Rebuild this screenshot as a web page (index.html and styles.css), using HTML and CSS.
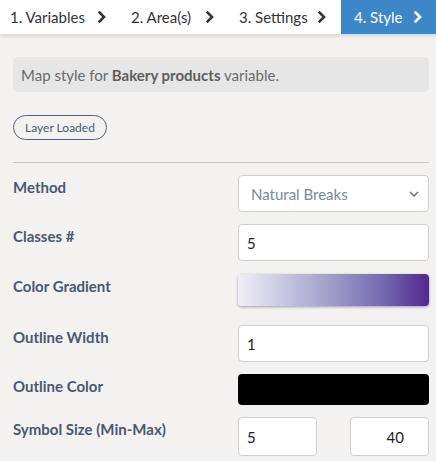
FILE: index.html
```html
<!DOCTYPE html>
<html>
<head>
<meta charset="utf-8">
<link rel="stylesheet" href="styles.css">
</head>
<body>
<nav class="tabs">
  <div class="tab t1"><span>1. Variables</span><svg class="chev" viewBox="0 0 8 12"><polyline points="1.5,1.5 6,6 1.5,10.5"/></svg></div>
  <div class="tab t2"><span>2. Area(s)</span><svg class="chev" viewBox="0 0 8 12"><polyline points="1.5,1.5 6,6 1.5,10.5"/></svg></div>
  <div class="tab t3"><span>3. Settings</span><svg class="chev" viewBox="0 0 8 12"><polyline points="1.5,1.5 6,6 1.5,10.5"/></svg></div>
  <div class="tab t4 active"><span>4. Style</span><svg class="chev" viewBox="0 0 8 12"><polyline points="1.5,1.5 6,6 1.5,10.5"/></svg></div>
</nav>
<main class="content">
  <div class="info">Map style for <b>Bakery products</b> variable.</div>
  <div class="badge">Layer Loaded</div>
  <hr class="sep">
  <div class="row r-method">
    <label>Method</label>
    <div class="control select"><span>Natural Breaks</span><svg class="down" viewBox="0 0 10 6"><polyline points="1,1 5,5 9,1"/></svg></div>
  </div>
  <div class="row r-classes">
    <label>Classes #</label>
    <div class="control input">5</div>
  </div>
  <div class="row r-grad">
    <label>Color Gradient</label>
    <div class="control gradient"></div>
  </div>
  <div class="row r-width">
    <label>Outline Width</label>
    <div class="control input">1</div>
  </div>
  <div class="row r-color">
    <label>Outline Color</label>
    <div class="control swatch"></div>
  </div>
  <div class="row r-size">
    <label>Symbol Size (Min-Max)</label>
    <div class="control pair">
      <div class="input small">5</div>
      <div class="input small right">40</div>
    </div>
  </div>
</main>
</body>
</html>
```
FILE: styles.css
```css
* { box-sizing: border-box; }
html, body { margin: 0; padding: 0; }
body {
  width: 436px;
  height: 461px;
  overflow: hidden;
  background: #f3f2f1;
  font-family: Lato, "Open Sans", sans-serif;
  color: #333;
}
.tabs {
  display: flex;
  height: 34px;
  background: #fff;
  box-shadow: 0 2px 4px rgba(0,0,0,0.12);
  position: relative;
}
.tab {
  display: flex;
  align-items: center;
  justify-content: space-between;
  padding: 0 15px 0 10px;
  font-size: 15px;
  color: #333;
}
.t1 { width: 121px; }
.t2 { width: 108px; }
.t3 { width: 112px; }
.t4 { width: 95px; padding-left: 13px; padding-right: 14px; }
.tab.active { background: #3d87c9; color: #fff; }
.chev { width: 8px; height: 12px; }
.chev polyline { fill: none; stroke: #333; stroke-width: 2.6; stroke-linecap: square; }
.active .chev polyline { stroke: #fff; }
.content { padding: 23px 7px 0 13px; }
.info {
  background: #e6e6e6;
  border-radius: 5px;
  height: 35px;
  padding: 0 8px;
  display: flex;
  align-items: center;
  font-size: 15px;
  color: #6b6b6b;
  white-space: pre;
}
.info b { color: #5e5e5e; }
.badge {
  margin-top: 23px;
  width: 94px;
  height: 25px;
  border: 1px solid #56647d;
  border-radius: 13px;
  display: flex;
  align-items: center;
  justify-content: center;
  font-size: 12px;
  color: #4a5872;
}
.sep {
  margin: 22px 0 0 0;
  border: 0;
  border-top: 1px solid #c6c6c6;
  height: 0;
}
.row {
  display: flex;
  justify-content: space-between;
  align-items: flex-start;
}
.row label {
  font-size: 15px;
  font-weight: bold;
  color: #4a5872;
  padding-top: 3px;
}
.control { width: 191px; }
.input {
  height: 37px;
  background: #fff;
  border: 1px solid #cfcfcf;
  border-radius: 4px;
  padding: 0 8px;
  display: flex;
  align-items: center;
  font-size: 15px;
  color: #222;
}
.select {
  height: 37px;
  background: #fff;
  border: 1px solid #cfcfcf;
  border-radius: 4px;
  padding: 0 9px 0 12px;
  display: flex;
  align-items: center;
  justify-content: space-between;
  font-size: 15px;
  color: #7a879e;
}
.down { width: 10px; height: 6px; }
.down polyline { fill: none; stroke: #6a7891; stroke-width: 1.6; }
.gradient {
  height: 32px;
  border-radius: 4px;
  background: linear-gradient(to right, #f0eef6, #bcbddc 30%, #9e9ac8 50%, #756bb1 75%, #54278f);
  box-shadow: 0 1px 3px rgba(0,0,0,0.35);
}
.swatch {
  height: 31px;
  border-radius: 4px;
  background: #000;
}
.pair { display: flex; justify-content: space-between; }
.input.small { width: 79px; height: 39px; }
.input.right { justify-content: flex-end; padding-right: 24px; }
.r-method { margin-top: 12px; }
.r-classes { margin-top: 12px; }
.r-grad { margin-top: 13px; }
.r-width { margin-top: 19px; }
.r-color { margin-top: 12px; }
.r-size { margin-top: 12px; }
```
